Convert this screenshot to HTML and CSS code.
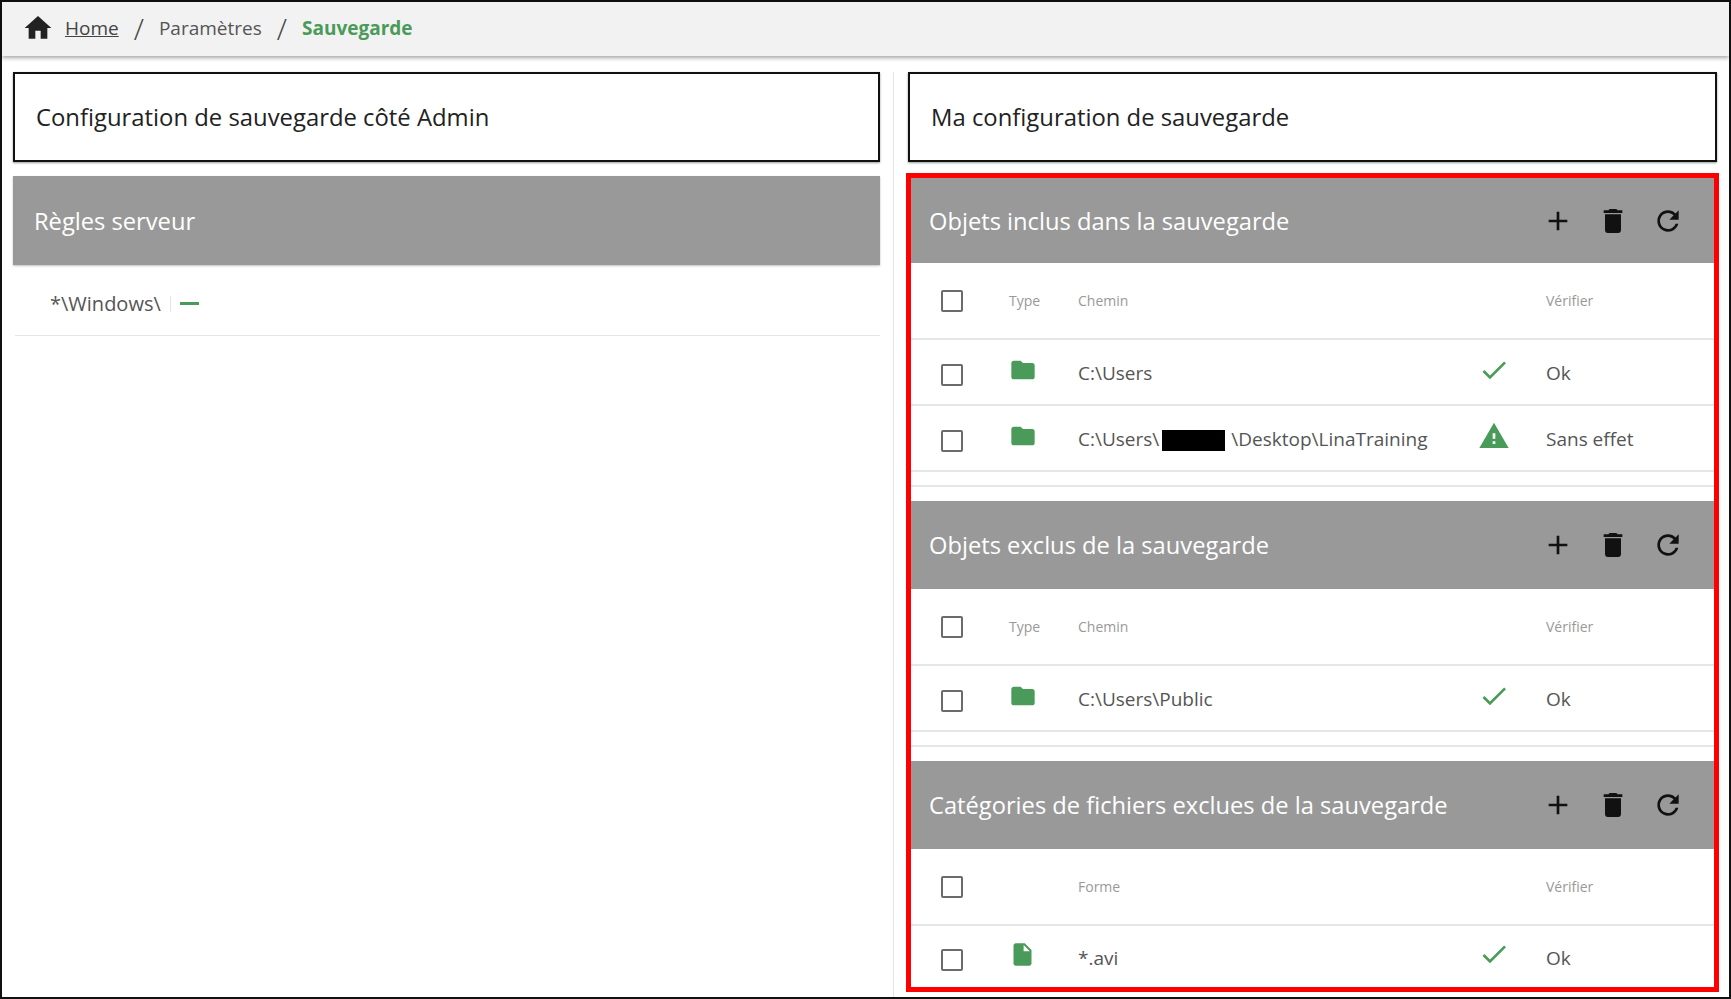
FILE: index.html
```html
<!DOCTYPE html>
<html lang="fr">
<head>
    <meta charset="UTF-8">
    <title>Sauvegarde</title>
    <link rel="stylesheet" href="styles.css">
</head>
<body>
<div class="app">
    <header class="crumbs">
        <svg class="home" viewBox="0 0 24 24"><path d="M10 20v-6h4v6h5v-8h3L12 3 2 12h3v8z"/></svg>
        <a class="crumb-link" href="#">Home</a>
        <span class="crumb-sep">/</span>
        <span class="crumb">Paramètres</span>
        <span class="crumb-sep">/</span>
        <span class="crumb-current">Sauvegarde</span>
    </header>

    <main class="columns">
        <div class="col col-left">
            <div class="title-box">Configuration de sauvegarde côté Admin</div>
            <div class="bar bar-left"><span class="bar-title">Règles serveur</span></div>
            <div class="rule-row">
                <span class="rule-text">*\Windows\</span>
                <span class="rule-sep"></span>
                <span class="rule-dash"></span>
            </div>
        </div>

        <div class="col col-right">
            <div class="title-box">Ma configuration de sauvegarde</div>

            <div class="red-box">
                <section>
                    <div class="bar bar-first">
                        <span class="bar-title">Objets inclus dans la sauvegarde</span>
                        <div class="bar-icons">
                            <svg viewBox="0 0 24 24"><path d="M19 13h-6v6h-2v-6H5v-2h6V5h2v6h6v2z"/></svg>
                            <svg viewBox="0 0 24 24"><path d="M6 19c0 1.1.9 2 2 2h8c1.1 0 2-.9 2-2V7H6v12zM19 4h-3.5l-1-1h-5l-1 1H5v2h14V4z"/></svg>
                            <svg viewBox="0 0 24 24"><path d="M17.65 6.35C16.2 4.9 14.21 4 12 4c-4.42 0-7.99 3.58-7.99 8s3.57 8 7.99 8c3.73 0 6.84-2.55 7.73-6h-2.08c-.82 2.33-3.04 4-5.65 4-3.31 0-6-2.69-6-6s2.69-6 6-6c1.66 0 3.14.69 4.22 1.78L13 11h7V4l-2.35 2.35z"/></svg>
                        </div>
                    </div>
                    <div class="row row-head">
                        <span class="box box-head"></span>
                        <span>Type</span>
                        <span>Chemin</span>
                        <span></span>
                        <span class="cell-check">Vérifier</span>
                    </div>
                    <div class="row">
                        <span class="box"></span>
                        <svg class="ico-folder" viewBox="0 0 24 24"><path d="M10 4H4c-1.1 0-2 .9-2 2v12c0 1.1.9 2 2 2h16c1.1 0 2-.9 2-2V8c0-1.1-.9-2-2-2h-8l-2-2z"/></svg>
                        <span>C:\Users</span>
                        <svg class="ico-state" viewBox="0 0 24 24"><path d="M9 16.17L4.83 12l-1.42 1.41L9 19 21 7l-1.41-1.41z"/></svg>
                        <span class="cell-check">Ok</span>
                    </div>
                    <div class="row">
                        <span class="box"></span>
                        <svg class="ico-folder" viewBox="0 0 24 24"><path d="M10 4H4c-1.1 0-2 .9-2 2v12c0 1.1.9 2 2 2h16c1.1 0 2-.9 2-2V8c0-1.1-.9-2-2-2h-8l-2-2z"/></svg>
                        <span class="path">C:\Users\<span class="redacted"></span>\Desktop\LinaTraining</span>
                        <svg class="ico-state" viewBox="0 0 24 24"><path d="M1 21h22L12 2 1 21zm12-3h-2v-2h2v2zm0-4h-2v-4h2v4z"/></svg>
                        <span class="cell-check">Sans effet</span>
                    </div>
                    <div class="section-end"></div>
                </section>

                <section>
                    <div class="bar">
                        <span class="bar-title">Objets exclus de la sauvegarde</span>
                        <div class="bar-icons">
                            <svg viewBox="0 0 24 24"><path d="M19 13h-6v6h-2v-6H5v-2h6V5h2v6h6v2z"/></svg>
                            <svg viewBox="0 0 24 24"><path d="M6 19c0 1.1.9 2 2 2h8c1.1 0 2-.9 2-2V7H6v12zM19 4h-3.5l-1-1h-5l-1 1H5v2h14V4z"/></svg>
                            <svg viewBox="0 0 24 24"><path d="M17.65 6.35C16.2 4.9 14.21 4 12 4c-4.42 0-7.99 3.58-7.99 8s3.57 8 7.99 8c3.73 0 6.84-2.55 7.73-6h-2.08c-.82 2.33-3.04 4-5.65 4-3.31 0-6-2.69-6-6s2.69-6 6-6c1.66 0 3.14.69 4.22 1.78L13 11h7V4l-2.35 2.35z"/></svg>
                        </div>
                    </div>
                    <div class="row row-head">
                        <span class="box box-head"></span>
                        <span>Type</span>
                        <span>Chemin</span>
                        <span></span>
                        <span class="cell-check">Vérifier</span>
                    </div>
                    <div class="row">
                        <span class="box"></span>
                        <svg class="ico-folder" viewBox="0 0 24 24"><path d="M10 4H4c-1.1 0-2 .9-2 2v12c0 1.1.9 2 2 2h16c1.1 0 2-.9 2-2V8c0-1.1-.9-2-2-2h-8l-2-2z"/></svg>
                        <span>C:\Users\Public</span>
                        <svg class="ico-state" viewBox="0 0 24 24"><path d="M9 16.17L4.83 12l-1.42 1.41L9 19 21 7l-1.41-1.41z"/></svg>
                        <span class="cell-check">Ok</span>
                    </div>
                    <div class="section-end"></div>
                </section>

                <section>
                    <div class="bar">
                        <span class="bar-title">Catégories de fichiers exclues de la sauvegarde</span>
                        <div class="bar-icons">
                            <svg viewBox="0 0 24 24"><path d="M19 13h-6v6h-2v-6H5v-2h6V5h2v6h6v2z"/></svg>
                            <svg viewBox="0 0 24 24"><path d="M6 19c0 1.1.9 2 2 2h8c1.1 0 2-.9 2-2V7H6v12zM19 4h-3.5l-1-1h-5l-1 1H5v2h14V4z"/></svg>
                            <svg viewBox="0 0 24 24"><path d="M17.65 6.35C16.2 4.9 14.21 4 12 4c-4.42 0-7.99 3.58-7.99 8s3.57 8 7.99 8c3.73 0 6.84-2.55 7.73-6h-2.08c-.82 2.33-3.04 4-5.65 4-3.31 0-6-2.69-6-6s2.69-6 6-6c1.66 0 3.14.69 4.22 1.78L13 11h7V4l-2.35 2.35z"/></svg>
                        </div>
                    </div>
                    <div class="row row-head">
                        <span class="box box-head"></span>
                        <span></span>
                        <span>Forme</span>
                        <span></span>
                        <span class="cell-check">Vérifier</span>
                    </div>
                    <div class="row row-last">
                        <span class="box"></span>
                        <svg class="ico-file" viewBox="0 0 24 24"><path d="M6 2c-1.1 0-1.99.9-1.99 2L4 20c0 1.1.89 2 1.99 2H18c1.1 0 2-.9 2-2V8l-6-6H6zm7 7V3.5L18.5 9H13z"/></svg>
                        <span>*.avi</span>
                        <svg class="ico-state" viewBox="0 0 24 24"><path d="M9 16.17L4.83 12l-1.42 1.41L9 19 21 7l-1.41-1.41z"/></svg>
                        <span class="cell-check">Ok</span>
                    </div>
                </section>
            </div>
        </div>
    </main>
</div>
</body>
</html>
```

FILE: styles.css
```css
* {
    box-sizing: border-box;
}

html, body {
    margin: 0;
    padding: 0;
    height: 100%;
    overflow: hidden;
}

body {
    font-family: "Open Sans", "Noto Sans", Arial, sans-serif;
    color: #555;
    background-color: #fff;
}

.app {
    height: 999px;
    border: 2px solid #111;
    display: flex;
    flex-direction: column;
}

/* breadcrumb */
.crumbs {
    height: 54px;
    flex: none;
    display: flex;
    align-items: center;
    padding: 0 0 2px 20px;
    background-color: #f2f2f2;
    box-shadow: 0 2px 4px rgba(0, 0, 0, 0.35);
    font-size: 19px;
    position: relative;
}

.home {
    width: 32px;
    height: 32px;
    fill: #222;
    margin-right: 11px;
}

.crumb-link {
    color: #444;
    text-decoration: underline;
}

.crumb-sep {
    font-size: 30px;
    font-weight: 300;
    color: #444;
    margin: 0 15px;
}

.crumb-current {
    color: #4a9b5a;
    font-weight: 700;
}

/* columns */
.columns {
    flex: 1;
    display: flex;
    min-height: 0;
    margin-top: 16px;
}

.col {
    display: flex;
    flex-direction: column;
}

.col-left {
    width: 892px;
    flex: none;
    padding: 0 13px 0 11px;
    border-right: 1px solid #e4e4e4;
}

.col-right {
    flex: 1;
    min-width: 0;
    padding: 0 12px 0 14px;
}

.title-box {
    height: 90px;
    flex: none;
    display: flex;
    align-items: center;
    padding-left: 21px;
    border: 2px solid #111;
    box-shadow: 0 1px 2px rgba(0, 0, 0, 0.4);
    font-size: 23.85px;
    color: #222;
}

/* grey bars */
.bar {
    height: 88px;
    display: flex;
    align-items: center;
    justify-content: space-between;
    padding: 0 30px 0 18px;
    background-color: #999;
    color: #fff;
    font-size: 23.7px;
}

.bar-first {
    height: 85px;
}

.bar-left {
    height: 89px;
    margin-top: 14px;
    padding-left: 21px;
    box-shadow: 0 1px 2px rgba(0, 0, 0, 0.25);
}

.bar-icons {
    display: flex;
    gap: 23px;
}

.bar-icons svg {
    width: 32px;
    height: 32px;
    fill: #111;
}

/* left list */
.rule-row {
    height: 71px;
    display: flex;
    align-items: center;
    margin-left: 2px;
    padding: 7px 0 0 35px;
    border-bottom: 1px solid #e6e6e6;
    font-size: 20px;
    color: #555;
}

.rule-sep {
    width: 1px;
    height: 16px;
    margin: 0 9px;
    background-color: #e4e4e4;
}

.rule-dash {
    width: 19px;
    height: 3px;
    background-color: #4a9b5a;
}

/* right sections */
.red-box {
    flex: none;
    margin: 11px -2px 0;
    border: 5px solid #f00;
}

.row {
    height: 66px;
    padding-top: 2px;
    display: grid;
    grid-template-columns: 98px 69px 1fr 36px 202px;
    align-items: center;
    border-bottom: 2px solid #e6e6e6;
    font-size: 19px;
}

.row-head {
    height: 77px;
    padding-top: 0;
    font-size: 14px;
    color: #999;
}

.row-last {
    height: 61px;
    border-bottom: none;
}

.cell-check {
    padding-left: 34px;
}

.box {
    width: 22px;
    height: 22px;
    margin: 4px 0 0 30px;
    border: 2px solid #6b6b6b;
    border-radius: 2px;
}

.box-head {
    margin-top: 0;
}

.ico-folder, .ico-file, .ico-state {
    fill: #4a9b5a;
    margin-bottom: 7px;
}

.ico-folder {
    width: 28px;
    height: 28px;
}

.ico-file {
    width: 27px;
    height: 27px;
}

.ico-state {
    width: 32px;
    height: 32px;
    margin-left: 2px;
}

.redacted {
    display: inline-block;
    width: 63px;
    height: 21px;
    margin: 0 6px 0 3px;
    vertical-align: -5px;
    background-color: #000;
}

.section-end {
    height: 15px;
    margin-bottom: 14px;
    border-bottom: 2px solid #e6e6e6;
}
```
